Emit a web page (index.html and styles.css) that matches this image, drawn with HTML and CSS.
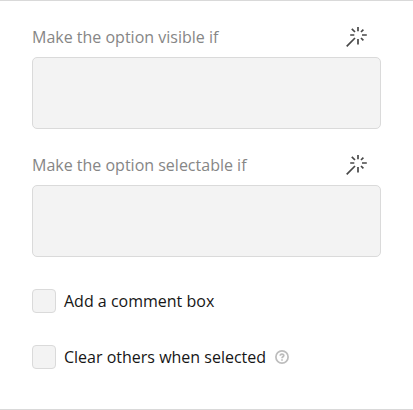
FILE: index.html
```html
<!DOCTYPE html>
<html lang="en">
<head>
<meta charset="utf-8">
<title>Option settings</title>
<link rel="stylesheet" href="styles.css">
</head>
<body>
<main class="panel">
  <section class="field">
    <div class="field-header">
      <span class="field-title">Make the option visible if</span>
      <svg class="wand" viewBox="0 0 24 24"><path d="M1.7 21.3L10 13M13 2V6.3M13 14V19.5M5.2 10H9.3M17 10H21.8M6.8 3.8L10 7M18.4 4.6L16 7M18.4 15.4L16 13"/></svg>
    </div>
    <div class="expression"></div>
  </section>
  <section class="field">
    <div class="field-header">
      <span class="field-title">Make the option selectable if</span>
      <svg class="wand" viewBox="0 0 24 24"><path d="M1.7 21.3L10 13M13 2V6.3M13 14V19.5M5.2 10H9.3M17 10H21.8M6.8 3.8L10 7M18.4 4.6L16 7M18.4 15.4L16 13"/></svg>
    </div>
    <div class="expression"></div>
  </section>
  <div class="check"><span class="box"></span><span>Add a comment box</span></div>
  <div class="check"><span class="box"></span><span>Clear others when selected</span>
    <svg class="help" viewBox="0 0 14 14"><circle cx="7" cy="7" r="6.1"/><path d="M5.2 5.8C5.2 3.6 8.8 3.6 8.8 5.6C8.8 6.8 7 6.7 7 8.2M7 9.2V10.7"/></svg>
  </div>
</main>
</body>
</html>
```
FILE: styles.css
```css
* { box-sizing: border-box; }
body { margin: 0; background: #fff; font: 16px/24px "Open Sans", sans-serif; color: #161616; }
.panel { height: 410px; padding: 24px 32px 0; border-top: 1px solid #d9d9d9; border-bottom: 1px solid #d9d9d9; }
.field { height: 128px; }
.field-header { display: flex; justify-content: space-between; height: 32px; padding-right: 12px; }
.field-title { color: #868686; }
.wand { width: 24px; height: 24px; fill: none; stroke: #484848; stroke-width: 1.7; }
.expression { height: 72px; background: #f3f3f3; border: 1px solid #dadada; border-radius: 5px; }
.check { display: flex; align-items: center; height: 24px; margin-top: 8px; }
.check + .check { margin-top: 32px; }
.box { width: 24px; height: 24px; margin-right: 8px; background: #f3f3f3; border: 1px solid #dadada; border-radius: 4px; }
.help { width: 14px; height: 14px; margin-left: 9px; fill: none; stroke: #bdbdbd; stroke-width: 1.7; }
```
